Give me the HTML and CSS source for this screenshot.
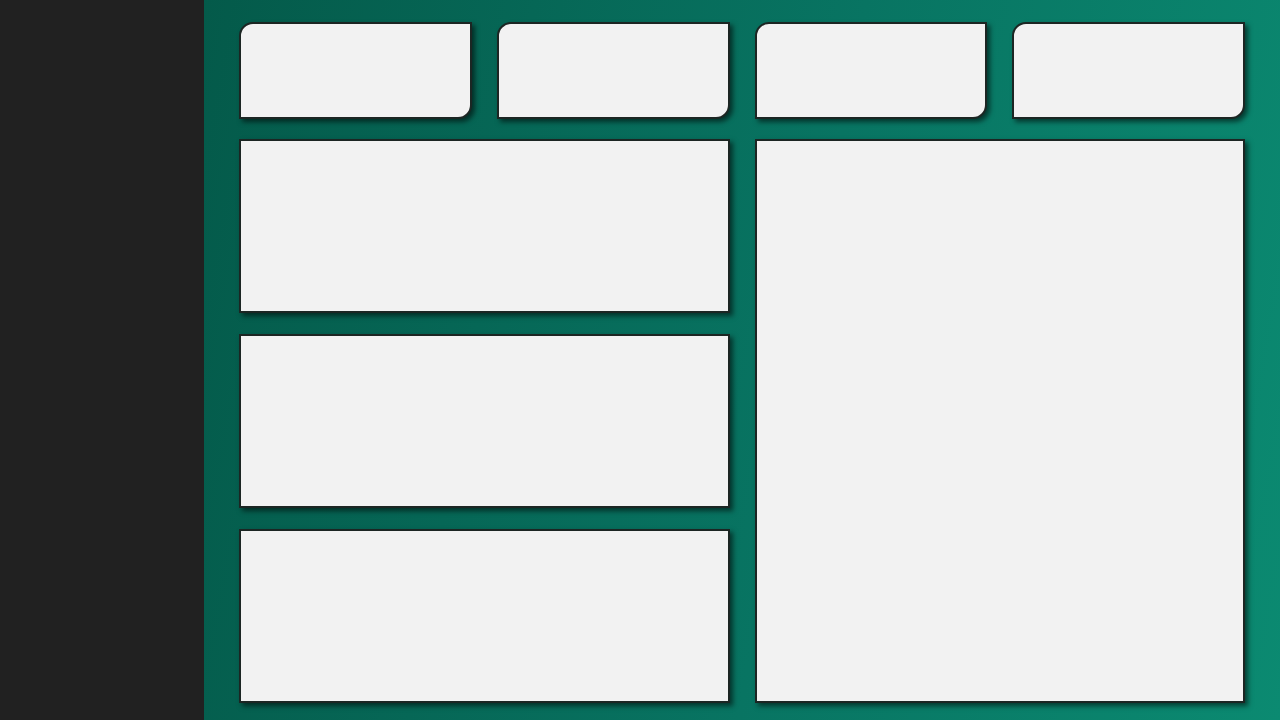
FILE: index.html
```html
<!DOCTYPE html>
<html>
<head>
  <meta charset="UTF-8">
  <title>Dashboard</title>
  <link rel="stylesheet" href="styles.css">
</head>
<body>
  <div class="layout">
    <aside class="sidebar"></aside>

    <main class="main">
      <!-- Stat cards -->
      <div class="stats">
        <div class="stat-card"></div>
        <div class="stat-card"></div>
        <div class="stat-card"></div>
        <div class="stat-card"></div>
      </div>

      <!-- Panels -->
      <div class="panels">
        <div class="panel-column">
          <div class="panel"></div>
          <div class="panel"></div>
          <div class="panel"></div>
        </div>
        <div class="panel panel-tall"></div>
      </div>
    </main>
  </div>
</body>
</html>
```

FILE: styles.css
```css
html, body {
  margin: 0;
  padding: 0;
  height: 100%;
  font-family: "Liberation Sans", Arial, sans-serif;
}

.layout {
  display: flex;
  height: 100vh;
}

.sidebar {
  width: 204px;
  flex-shrink: 0;
  background-color: #212121;
}

.main {
  flex: 1;
  display: flex;
  flex-direction: column;
  gap: 20px;
  padding: 22px 35px 17px 35px;
  background: linear-gradient(100deg, #045a4a 0%, #087462 55%, #0b8a71 100%);
  box-sizing: border-box;
}

.stats {
  display: grid;
  grid-template-columns: repeat(4, 1fr);
  gap: 25px;
  height: 97px;
  flex-shrink: 0;
}

.stat-card,
.panel {
  background-color: #f2f2f2;
  border: 2px solid #1c2623;
  box-sizing: border-box;
  box-shadow: 3px 3px 5px rgba(0, 0, 0, 0.55);
}

.stat-card {
  border-radius: 14px 0 14px 0;
}

.panels {
  flex: 1;
  display: grid;
  grid-template-columns: 1fr 1fr;
  gap: 25px;
  min-height: 0;
}

.panel-column {
  display: flex;
  flex-direction: column;
  gap: 21px;
}

.panel-column .panel {
  flex: 1;
}
```
